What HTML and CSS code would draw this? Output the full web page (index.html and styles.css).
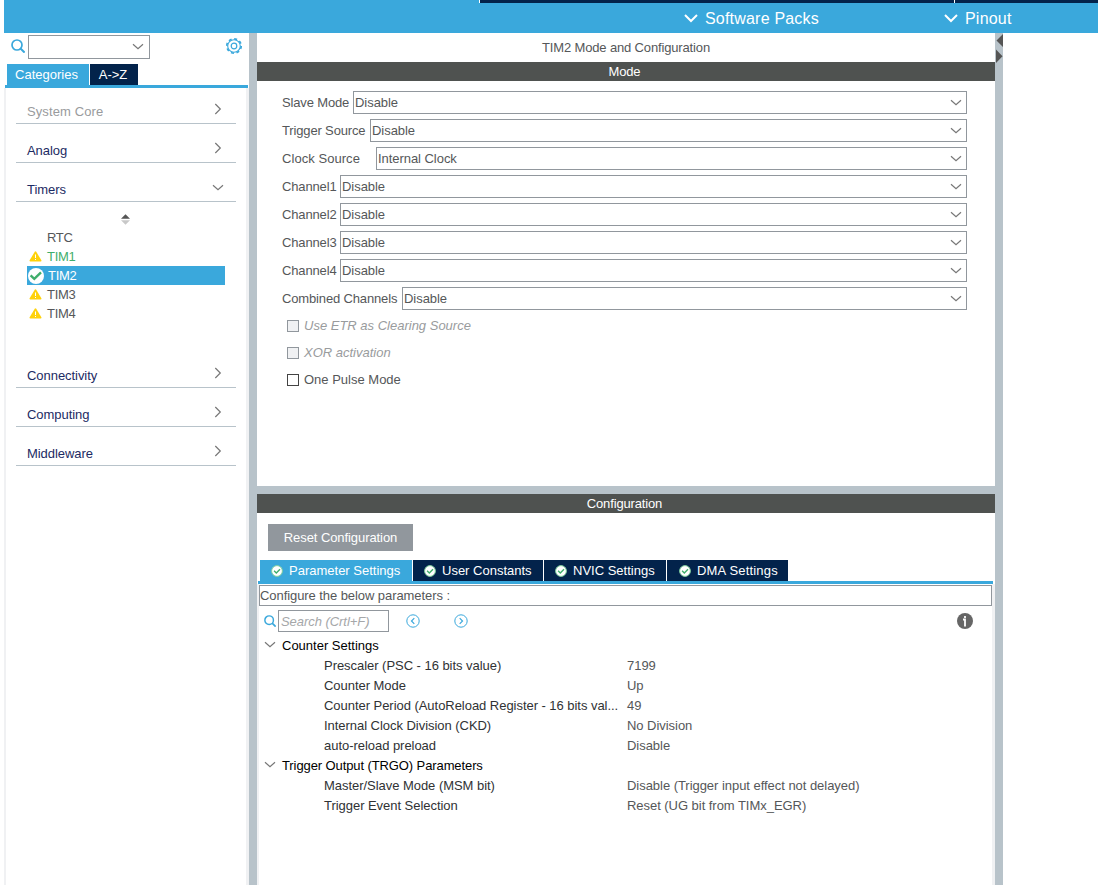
FILE: index.html
```html
<!DOCTYPE html>
<html lang="en">
<head>
    <meta charset="UTF-8">
    <meta name="viewport" content="width=device-width, initial-scale=1.0">
    <title>TIM2 Mode and Configuration</title>
    <link rel="stylesheet" href="styles.css">
</head>
<body>
    <!-- Shared icons -->
    <svg class="sprite" width="0" height="0">
        <symbol id="chevron-down" viewBox="0 0 12 8"><path d="M1 1.2L6 5.8L11 1.2" fill="none" stroke="currentColor" stroke-width="1.2"/></symbol>
        <symbol id="chevron-right" viewBox="0 0 8 12"><path d="M1.3 1L6.3 6L1.3 11" fill="none" stroke="currentColor" stroke-width="1.2"/></symbol>
        <symbol id="chevron-bold" viewBox="0 0 14 10"><path d="M1 2L7 8L13 2" fill="none" stroke="currentColor" stroke-width="2"/></symbol>
        <symbol id="search" viewBox="0 0 14 14"><circle cx="6" cy="6" r="5" fill="none" stroke="currentColor" stroke-width="1.7"/><path d="M9.5 9.5L13.6 13.6" stroke="currentColor" stroke-width="2"/></symbol>
        <symbol id="warning" viewBox="0 0 14 12"><path d="M6.2 .9Q7 -.2 7.8 .9L13.4 10Q13.9 11.3 12.6 11.5H1.4Q.1 11.3 .6 10Z" fill="#ffd20a"/><path d="M7 3.7V7.5M7 8.7V9.8" stroke="#fff" stroke-width="1.1"/></symbol>
        <symbol id="check" viewBox="0 0 12 12"><circle cx="6" cy="6" r="5.4" fill="#fff" stroke="#7fcf9d" stroke-width="1"/><path d="M3.1 5.8L5.3 7.9L9 4.2" fill="none" stroke="#3fae6b" stroke-width="1.4"/></symbol>
    </svg>

    <!-- Header -->
    <div class="header">
        <div class="header-strip"><span></span><span></span></div>
        <div class="header-menu">
            <div class="menu-item"><svg width="14" height="10"><use href="#chevron-bold"/></svg>Software Packs</div>
            <div class="menu-item pinout"><svg width="14" height="10"><use href="#chevron-bold"/></svg>Pinout</div>
        </div>
    </div>

    <div class="workspace">
        <!-- Sidebar -->
        <div class="sidebar">
            <div class="search-row">
                <svg class="blue search-icon" width="14" height="14"><use href="#search"/></svg>
                <div class="search-combo"><svg width="12" height="8"><use href="#chevron-down"/></svg></div>
                <svg class="gear" width="18" height="18" viewBox="0 0 18 18">
                    <circle cx="9" cy="9" r="6.3" fill="none" stroke="#3aa8dc" stroke-width="1.1"/>
                    <circle cx="9" cy="9" r="7.2" fill="none" stroke="#3aa8dc" stroke-width="1.7" stroke-dasharray="3 2.65"/>
                    <circle cx="9" cy="9" r="2.8" fill="none" stroke="#3aa8dc" stroke-width="1.2"/>
                </svg>
            </div>
            <div class="side-tabs">
                <div class="side-tab active">Categories</div>
                <div class="side-tab">A-&gt;Z</div>
            </div>
            <div class="categories">
                <div class="category first disabled">System Core<svg width="8" height="12"><use href="#chevron-right"/></svg></div>
                <div class="category">Analog<svg width="8" height="12"><use href="#chevron-right"/></svg></div>
                <div class="category open">Timers<svg width="12" height="8"><use href="#chevron-down"/></svg></div>
                <div class="timers">
                    <svg class="sorter" width="9" height="11" viewBox="0 0 9 11"><path d="M0 4.8L4.5 .3L9 4.8Z" fill="#555"/><path d="M0 6.2L4.5 10.7L9 6.2Z" fill="#c8c8c8"/></svg>
                    <div class="timer"><span class="timer-icon"></span>RTC</div>
                    <div class="timer green"><span class="timer-icon"><svg width="13" height="11"><use href="#warning"/></svg></span>TIM1</div>
                    <div class="timer selected"><span class="timer-icon"><svg width="16" height="16" viewBox="0 0 16 16"><circle cx="8" cy="8" r="8" fill="#fff"/><path d="M2.6 7.3L6.3 10.8L13 4.3" fill="none" stroke="#3fae6b" stroke-width="2.4"/></svg></span>TIM2</div>
                    <div class="timer"><span class="timer-icon"><svg width="13" height="11"><use href="#warning"/></svg></span>TIM3</div>
                    <div class="timer"><span class="timer-icon"><svg width="13" height="11"><use href="#warning"/></svg></span>TIM4</div>
                </div>
                <div class="category">Connectivity<svg width="8" height="12"><use href="#chevron-right"/></svg></div>
                <div class="category">Computing<svg width="8" height="12"><use href="#chevron-right"/></svg></div>
                <div class="category">Middleware<svg width="8" height="12"><use href="#chevron-right"/></svg></div>
            </div>
        </div>

        <div class="splitter"></div>

        <!-- Main panel -->
        <div class="main">
            <div class="mode-panel">
                <div class="panel-title">TIM2 Mode and Configuration</div>
                <div class="bar mode-bar">Mode</div>
                <div class="mode-form">
                    <div class="field slave"><label>Slave Mode</label><div class="select">Disable<svg width="12" height="8"><use href="#chevron-down"/></svg></div></div>
                    <div class="field trigger"><label>Trigger Source</label><div class="select">Disable<svg width="12" height="8"><use href="#chevron-down"/></svg></div></div>
                    <div class="field clock"><label>Clock Source</label><div class="select">Internal Clock<svg width="12" height="8"><use href="#chevron-down"/></svg></div></div>
                    <div class="field"><label>Channel1</label><div class="select">Disable<svg width="12" height="8"><use href="#chevron-down"/></svg></div></div>
                    <div class="field"><label>Channel2</label><div class="select">Disable<svg width="12" height="8"><use href="#chevron-down"/></svg></div></div>
                    <div class="field"><label>Channel3</label><div class="select">Disable<svg width="12" height="8"><use href="#chevron-down"/></svg></div></div>
                    <div class="field"><label>Channel4</label><div class="select">Disable<svg width="12" height="8"><use href="#chevron-down"/></svg></div></div>
                    <div class="field combined"><label>Combined Channels</label><div class="select">Disable<svg width="12" height="8"><use href="#chevron-down"/></svg></div></div>
                    <div class="checks">
                        <div class="check-row disabled"><span class="box"></span>Use ETR as Clearing Source</div>
                        <div class="check-row disabled"><span class="box"></span>XOR activation</div>
                        <div class="check-row"><span class="box"></span>One Pulse Mode</div>
                    </div>
                </div>
            </div>

            <!-- Configuration -->
            <div class="config-panel">
                <div class="bar">Configuration</div>
                <button class="reset-btn">Reset Configuration</button>
                <div class="tabs">
                    <div class="tab parameter active"><svg width="12" height="12"><use href="#check"/></svg>Parameter Settings</div>
                    <div class="tab user"><svg width="12" height="12"><use href="#check"/></svg>User Constants</div>
                    <div class="tab nvic"><svg width="12" height="12"><use href="#check"/></svg>NVIC Settings</div>
                    <div class="tab dma"><svg width="12" height="12"><use href="#check"/></svg>DMA Settings</div>
                </div>
                <div class="parameters">
                    <div class="hint">Configure the below parameters :</div>
                    <div class="toolbar">
                        <svg class="blue" width="12" height="12"><use href="#search"/></svg>
                        <div class="search-input">Search (Crtl+F)</div>
                        <svg class="prev" width="14" height="14" viewBox="0 0 14 14" fill="none" stroke="#3aa8dc"><circle cx="7" cy="7" r="6.2"/><path d="M8.3 4.2L5.5 7L8.3 9.8" stroke-width="1.2"/></svg>
                        <svg class="next" width="14" height="14" viewBox="0 0 14 14" fill="none" stroke="#3aa8dc"><circle cx="7" cy="7" r="6.2"/><path d="M5.7 4.2L8.5 7L5.7 9.8" stroke-width="1.2"/></svg>
                        <svg class="info" width="16" height="16" viewBox="0 0 16 16"><circle cx="8" cy="8" r="8" fill="#666"/><path d="M8 3V5M6 6.5H8V13.5" fill="none" stroke="#fff" stroke-width="1.8"/></svg>
                    </div>
                    <div class="tree">
                        <div class="group"><svg width="12" height="8"><use href="#chevron-down"/></svg>Counter Settings</div>
                        <div class="param"><span>Prescaler (PSC - 16 bits value)</span><span>7199</span></div>
                        <div class="param"><span>Counter Mode</span><span>Up</span></div>
                        <div class="param"><span>Counter Period (AutoReload Register - 16 bits val...</span><span>49</span></div>
                        <div class="param"><span>Internal Clock Division (CKD)</span><span>No Division</span></div>
                        <div class="param"><span>auto-reload preload</span><span>Disable</span></div>
                        <div class="group trgo"><svg width="12" height="8"><use href="#chevron-down"/></svg>Trigger Output (TRGO) Parameters</div>
                        <div class="param"><span>Master/Slave Mode (MSM bit)</span><span>Disable (Trigger input effect not delayed)</span></div>
                        <div class="param"><span>Trigger Event Selection</span><span>Reset (UG bit from TIMx_EGR)</span></div>
                    </div>
                </div>
            </div>
        </div>

        <div class="splitter right">
            <svg width="8" height="30" viewBox="0 0 8 30"><path d="M8 0V13L1.5 6.5Z M1 15.5V29L7.5 22.2Z" fill="#555"/></svg>
        </div>
    </div>
</body>
</html>
```

FILE: styles.css
```css
* {
    box-sizing: border-box;
}

body {
    margin: 0;
    height: 885px;
    overflow: hidden;
    display: flex;
    flex-direction: column;
    font-family: "Liberation Sans", Arial, sans-serif;
    font-size: 13px;
    line-height: 19px;
    color: #555759;
    background-color: #ffffff;
    white-space: nowrap;
}

svg {
    display: block;
    flex-shrink: 0;
    color: #777;
}

.sprite {
    position: absolute;
}

.blue {
    color: #3aa8dc;
}

/* Header */
.header {
    height: 33px;
    margin-left: 4px;
    background-color: #3aa8dc;
    flex-shrink: 0;
}

.header-strip {
    height: 3px;
    margin-left: 475px;
    display: flex;
}

.header-strip span {
    background-color: #03234b;
    border-left: 1px solid #ffffff;
    width: 475px;
}

.header-strip span:last-child {
    flex: 1;
}

.header-menu {
    height: 30px;
    padding-left: 680px;
    display: flex;
    align-items: center;
}

.menu-item {
    width: 260px;
    display: flex;
    align-items: center;
    gap: 7px;
    color: #ffffff;
    font-size: 16px;
    letter-spacing: 0.2px;
}

.menu-item.pinout {
    width: auto;
}

.menu-item svg {
    color: #ffffff;
}

.workspace {
    flex: 1;
    display: flex;
    min-height: 0;
}

/* Sidebar */
.sidebar {
    width: 245px;
    margin-left: 4px;
    display: flex;
    flex-direction: column;
}

.search-row {
    height: 31px;
    padding: 2px 6px 5px 7px;
    display: flex;
    align-items: center;
}

.search-icon {
    margin-bottom: 2px;
}

.search-combo {
    width: 122px;
    height: 24px;
    margin-left: 3px;
    padding-right: 5px;
    border: 1px solid #91979d;
    display: flex;
    align-items: center;
    justify-content: flex-end;
}

.gear {
    margin: 0 0 2px auto;
}

.side-tabs {
    height: 24px;
    margin: 0 1px;
    padding-left: 2px;
    border-bottom: 3px solid #3aa8dc;
    display: flex;
    gap: 1px;
}

.side-tab {
    width: 48px;
    padding-right: 2px;
    line-height: 21px;
    text-align: center;
    color: #ffffff;
    background-color: #03234b;
}

.side-tab.active {
    width: 82px;
    padding-right: 3px;
    background-color: #3aa8dc;
}

.categories {
    flex: 1;
    border-left: 2px solid #f0f1f3;
    border-right: 3px solid #f0f1f3;
    padding: 0 10px;
}

.category {
    height: 39px;
    padding: 17px 14px 0 11px;
    border-bottom: 1px solid #b8c3ca;
    display: flex;
    justify-content: space-between;
    color: #1c2b63;
    letter-spacing: -0.05px;
}

.category.first {
    height: 36px;
    padding-top: 14px;
    letter-spacing: 0.1px;
}

.category.disabled {
    color: #999b9d;
}

.category svg {
    margin-top: 1px;
}

.category.open {
    padding-right: 12px;
}

.category.open svg {
    margin-top: 4px;
}

.timers {
    height: 147px;
    padding: 12px 11px 0;
}

.sorter {
    margin: 0 0 3px 94px;
}

.timer {
    height: 19px;
    display: flex;
    align-items: center;
    letter-spacing: -0.3px;
}

.timer.green {
    color: #3fae6b;
}

.timer.selected {
    color: #ffffff;
    background-color: #3aa8dc;
}

.timer-icon {
    width: 20px;
    padding-left: 2px;
}

.timer.selected .timer-icon {
    width: 21px;
    padding-left: 1px;
}

/* Splitters */
.splitter {
    width: 8px;
    background-color: #b8c3ca;
}

.splitter.right {
    padding-top: 1px;
}

/* Main panel */
.main {
    width: 738px;
    display: flex;
    flex-direction: column;
}

.mode-panel {
    height: 461px;
    border-bottom: 8px solid #b8c3ca;
}

.panel-title {
    height: 29px;
    line-height: 29px;
    text-align: center;
    letter-spacing: -0.15px;
}

.bar {
    height: 19px;
    padding-right: 3px;
    text-align: center;
    letter-spacing: -0.15px;
    color: #ffffff;
    background-color: #4f5250;
}

.mode-form {
    padding: 10px 28px 0 25px;
}

.field {
    height: 23px;
    margin-bottom: 5px;
    display: flex;
    align-items: center;
}

.field label {
    width: 58px;
    letter-spacing: -0.15px;
}

.field.slave label {
    width: 71px;
}

.field.trigger label {
    width: 88px;
}

.field.clock label {
    width: 94px;
    letter-spacing: 0.05px;
}

.field.combined label {
    width: 120px;
}

.select {
    flex: 1;
    height: 23px;
    padding: 0 4px 0 1px;
    border: 1px solid #91979d;
    display: flex;
    align-items: center;
    justify-content: space-between;
    letter-spacing: -0.05px;
}

.checks {
    margin-top: -3px;
}

.check-row {
    height: 27px;
    padding-left: 5px;
    display: flex;
    align-items: center;
    gap: 5px;
}

.check-row .box {
    width: 12px;
    height: 12px;
    border: 1px solid #444;
}

.check-row.disabled {
    color: #999b9d;
    font-style: italic;
}

.check-row.disabled .box {
    border-color: #91979d;
    background-color: #f0f1f3;
}

/* Configuration */
.config-panel {
    flex: 1;
    display: flex;
    flex-direction: column;
}

.reset-btn {
    width: 145px;
    height: 27px;
    margin: 11px 0 9px 11px;
    padding: 0;
    border: none;
    font-family: inherit;
    font-size: 13px;
    letter-spacing: -0.08px;
    color: #ffffff;
    background-color: #91979d;
}

.tabs {
    height: 24px;
    margin: 0 2px 0 1px;
    padding-left: 2px;
    border-bottom: 3px solid #3aa8dc;
    display: flex;
    gap: 1px;
}

.tab {
    display: flex;
    align-items: center;
    gap: 6px;
    padding-left: 11px;
    color: #ffffff;
    background-color: #03234b;
}

.tab.active {
    background-color: #3aa8dc;
}

.tab.parameter {
    width: 152px;
}

.tab.user {
    width: 130px;
}

.tab.nvic {
    width: 122px;
}

.tab.dma {
    width: 121px;
    padding-left: 12px;
    letter-spacing: 0.17px;
}

.parameters {
    flex: 1;
    border-left: 2px solid #f0f1f3;
    border-right: 3px solid #f0f1f3;
    padding-top: 1px;
}

.hint {
    height: 21px;
    border: 1px solid #91979d;
    letter-spacing: -0.07px;
}

.toolbar {
    height: 30px;
    padding: 0 19px 0 5px;
    display: flex;
    align-items: center;
}

.search-input {
    width: 111px;
    height: 22px;
    margin-left: 2px;
    padding-left: 2px;
    border: 1px solid #91979d;
    line-height: 21px;
    letter-spacing: -0.05px;
    font-style: italic;
    color: #a5a7a9;
}

.prev {
    margin-left: 17px;
}

.next {
    margin-left: 34px;
}

.info {
    margin-left: auto;
}

.tree {
    margin-top: -1px;
}

.group {
    height: 20px;
    padding-left: 5px;
    display: flex;
    align-items: center;
    gap: 6px;
    color: #000000;
}

.group.trgo {
    letter-spacing: -0.1px;
}

.param {
    height: 20px;
    padding-left: 65px;
    display: grid;
    grid-template-columns: 303px auto;
    align-items: center;
    letter-spacing: -0.04px;
}

.param span:first-child {
    color: #303234;
}
```
